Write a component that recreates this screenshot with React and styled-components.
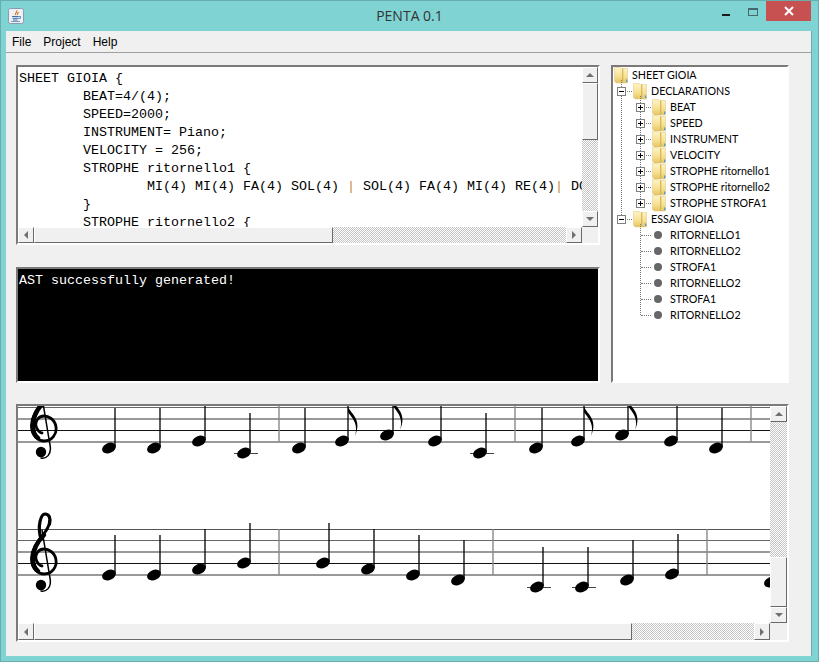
import React from 'react'
import styled, { createGlobalStyle } from 'styled-components'

const GlobalStyle = createGlobalStyle`
    html, body {
        margin: 0;
        padding: 0;
        background: #7fd3d3;
    }
`

const editorText = `SHEET GIOIA {
\tBEAT=4/(4);
\tSPEED=2000;
\tINSTRUMENT= Piano;
\tVELOCITY = 256;
\tSTROPHE ritornello1 {
\t\tMI(4) MI(4) FA(4) SOL(4) | SOL(4) FA(4) MI(4) RE(4)| DO(4)
\t}
\tSTROPHE ritornello2 {`

const declarations = ['BEAT', 'SPEED', 'INSTRUMENT', 'VELOCITY', 'STROPHE ritornello1', 'STROPHE ritornello2', 'STROPHE STROFA1']
const essay = ['RITORNELLO1', 'RITORNELLO2', 'STROFA1', 'RITORNELLO2', 'STROFA1', 'RITORNELLO2']

const staffLines = [
    { y: 0.5, color: '#555', width: 1 },
    { y: 11.5, color: '#666', width: 1 },
    { y: 23, color: '#999', width: 2 },
    { y: 34.5, color: '#111', width: 1 },
    { y: 46, color: '#999', width: 2 },
]

const notes = [
    { x: 109, y: 448 }, { x: 154, y: 448 }, { x: 199, y: 441 }, { x: 244, y: 453, ledger: true },
    { x: 299, y: 448 }, { x: 342, y: 441, flag: true }, { x: 387, y: 435, flag: true }, { x: 435, y: 441 },
    { x: 480, y: 453, ledger: true }, { x: 536, y: 448 }, { x: 578, y: 441, flag: true }, { x: 622, y: 435, flag: true },
    { x: 671, y: 441 }, { x: 716, y: 448 },
    { x: 109, y: 575 }, { x: 154, y: 575 }, { x: 199, y: 569 }, { x: 244, y: 563 },
    { x: 323, y: 563 }, { x: 368, y: 569 }, { x: 413, y: 575 }, { x: 458, y: 580 },
    { x: 537, y: 587, ledger: true }, { x: 582, y: 587, ledger: true }, { x: 627, y: 580 }, { x: 672, y: 574 },
    { x: 771, y: 582 },
]

const Clef = ({ y }) => (
    <g transform={`translate(0 ${y})`} fill="none" stroke="#000" strokeLinecap="round">
        <path strokeWidth="2.8" d="M49.5 521C50 533 32 541 31.5 558C31 570 40 574 44 574C52 574 57 567 56 560C55 552 48 549 44 549C38 549 35 555 36 559C37 563 40 566 42 566" />
        <path strokeWidth="4.5" d="M44 535C37 542 33 550 33 559C33 565 35 569 38 571" />
        <path strokeWidth="3.2" d="M41 539C37 526 41 514 45 514C49 514 51 518 49.5 524" />
        <path strokeWidth="1.5" d="M42 530L50 578C52 588 46 592 41 591" />
        <circle cx="41" cy="585" r="5.2" fill="#000" stroke="none" />
    </g>
)

const Note = ({ x, y, flag, ledger }) => {
    const top = y - 40
    const stem = x + 6
    return (
        <g>
            {ledger && <line x1={x - 10} x2={x + 14} y1={y + 0.5} y2={y + 0.5} stroke="#444" strokeWidth="1" />}
            <ellipse cx={x} cy={y} rx="7.2" ry="5" transform={`rotate(-24 ${x} ${y})`} fill="#000" />
            <line x1={stem} x2={stem} y1={y - 1} y2={top} stroke="#000" strokeWidth="1.3" />
            {flag && (
                <path
                    fill="#000"
                    d={`M${stem} ${top + 5}C${stem + 1} ${top + 12} ${stem + 15} ${top + 17} ${stem + 7} ${top + 35}C${stem + 11} ${top + 22} ${stem + 3} ${top + 16} ${stem} ${top + 11}Z`}
                />
            )}
        </g>
    )
}

const Score = () => (
    <ScoreSvg viewBox="18 406 753 218">
        {[396, 529].map(top => staffLines.map(line => (
            <line key={top + line.y} x1="18" x2="771" y1={top + line.y} y2={top + line.y} stroke={line.color} strokeWidth={line.width} />
        )))}
        {[279, 515, 751].map(x => <line key={x} x1={x} x2={x} y1="406" y2="442" stroke="#888" strokeWidth="1.4" />)}
        {[279, 493, 707].map(x => <line key={x} x1={x} x2={x} y1="529" y2="575" stroke="#888" strokeWidth="1.4" />)}
        <Clef y={-133} />
        <Clef y={0} />
        {notes.map(note => <Note key={`${note.x}-${note.y}`} {...note} />)}
    </ScoreSvg>
)

const FolderIcon = () => (
    <FolderSvg viewBox="0 0 14 17">
        <defs>
            <linearGradient id="folderFill" x1="0" x2="0" y1="0" y2="1">
                <stop offset="0" stopColor="#fdf4c8" />
                <stop offset="0.6" stopColor="#f6e08f" />
                <stop offset="1" stopColor="#e6c262" />
            </linearGradient>
        </defs>
        <path d="M0.5 0.5H6L7.5 1.5H13.5V16H2.5L0.5 14.5Z" fill="url(#folderFill)" stroke="#e2cc86" strokeWidth="0.6" />
        <rect x="8" y="1.5" width="1.3" height="14.5" fill="#d9b65a" />
        <rect x="12" y="12.5" width="1.4" height="2.5" fill="#4aa3d8" />
    </FolderSvg>
)

const JavaIcon = () => (
    <AppIconSvg viewBox="0 0 16 16">
        <rect x="0.5" y="0.5" width="15" height="15" rx="2" fill="#eef1f5" stroke="#8d9aab" />
        <path d="M8.5 2.5C10 4 6.5 5 7.5 7M10 4C10.5 5 9 5.5 9.5 7" fill="none" stroke="#e0752a" strokeWidth="1.2" />
        <path d="M4 8.5H10.5M4.5 10.3H10M5 12H9.5" stroke="#3f6ea8" strokeWidth="1" />
        <path d="M3 13.5H12" stroke="#7d97b8" strokeWidth="1" />
        <path d="M10.5 8.5H12.5V10.3H10" fill="none" stroke="#3f6ea8" strokeWidth="0.8" />
    </AppIconSvg>
)

const ScrollBar = ({ vertical, before, thumb }) => (
    <Bar $vertical={vertical}>
        <ArrowButton $dir={vertical ? 'up' : 'left'} />
        {before > 0 && <Track $vertical={vertical} $size={before} />}
        <Thumb $vertical={vertical} $size={thumb} />
        <Track $vertical={vertical} />
        <ArrowButton $dir={vertical ? 'down' : 'right'} />
    </Bar>
)

const TreeRow = ({ kind, open, label }) => (
    <Row>
        {kind !== 'root' && (
            <Slot>
                {kind === 'branch' && (
                    <Expander>
                        <svg width="7" height="7" viewBox="0 0 7 7">
                            <path d={open ? 'M1 3.5H6' : 'M1 3.5H6M3.5 1V6'} stroke="#000" strokeWidth="1" />
                        </svg>
                    </Expander>
                )}
            </Slot>
        )}
        <IconBox $root={kind === 'root'}>
            {kind === 'leaf' ? <LeafDot /> : <FolderIcon />}
        </IconBox>
        <RowLabel>{label}</RowLabel>
    </Row>
)

const App = () => {
    return (
        <Window>
            <GlobalStyle />
            <TitleBar>
                <JavaIcon />
                <Title>PENTA 0.1</Title>
                <Controls>
                    <ControlButton><MinimizeGlyph /></ControlButton>
                    <ControlButton><MaximizeGlyph /></ControlButton>
                    <CloseButton>
                        <svg width="10" height="10" viewBox="0 0 10 10">
                            <path d="M1 1L9 9M9 1L1 9" stroke="#fff" strokeWidth="2" />
                        </svg>
                    </CloseButton>
                </Controls>
            </TitleBar>
            <Frame>
                <MenuBar>
                    <MenuItem>File</MenuItem>
                    <MenuItem>Project</MenuItem>
                    <MenuItem>Help</MenuItem>
                </MenuBar>
                <Workspace>
                    <TopArea>
                        <LeftColumn>
                            <ScrollPane $height={180} $bar={16}>
                                <Code>{editorText.split('|').map((part, i) => (
                                    <React.Fragment key={i}>{i > 0 && <Pipe>|</Pipe>}{part}</React.Fragment>
                                ))}</Code>
                                <ScrollBar vertical before={0} thumb={57} />
                                <ScrollBar before={0} thumb={299} />
                                <Corner />
                            </ScrollPane>
                            <ConsolePanel>AST successfully generated!</ConsolePanel>
                        </LeftColumn>
                        <TreePanel>
                            <TreeRow kind="root" label="SHEET GIOIA" />
                            <Group $tail={104}>
                                <TreeRow kind="branch" open label="DECLARATIONS" />
                                <Group $tail={8}>
                                    {declarations.map(item => <TreeRow key={item} kind="branch" label={item} />)}
                                </Group>
                                <TreeRow kind="branch" open label="ESSAY GIOIA" />
                                <Group $tail={8}>
                                    {essay.map((item, i) => <TreeRow key={i} kind="leaf" label={item} />)}
                                </Group>
                            </Group>
                        </TreePanel>
                    </TopArea>
                    <ScrollPane $height={238} $bar={17}>
                        <ScoreView><Score /></ScoreView>
                        <ScrollBar vertical before={135} thumb={50} />
                        <ScrollBar before={0} thumb={598} />
                        <Corner />
                    </ScrollPane>
                </Workspace>
            </Frame>
        </Window>
    )
}

const Window = styled.div`
    width: 819px;
    height: 662px;
    box-sizing: border-box;
    display: flex;
    flex-direction: column;
    background: #7fd3d3;
    border: 1px solid #68aeae;
    overflow: hidden;
`
const TitleBar = styled.div`
    height: 30px;
    flex: none;
    display: grid;
    grid-template-columns: 1fr auto 1fr;
    align-items: start;
    padding: 0 7px 0 7px;
`
const AppIconSvg = styled.svg`
    width: 16px;
    height: 16px;
    margin-top: 7px;
`
const Title = styled.div`
    font: 14px "Open Sans", sans-serif;
    line-height: 29px;
    color: #333;
`
const Controls = styled.div`
    display: flex;
    justify-content: flex-end;
`
const ControlButton = styled.div`
    width: 27px;
    height: 20px;
    display: flex;
    align-items: center;
    justify-content: center;
`
const MinimizeGlyph = styled.div`
    width: 8px;
    height: 2px;
    margin-top: 8px;
    background: #1c1c1c;
`
const MaximizeGlyph = styled.div`
    width: 10px;
    height: 8px;
    margin-top: 2px;
    border: 1px solid #45696d;
    border-top-width: 2px;
    box-sizing: border-box;
`
const CloseButton = styled.div`
    width: 45px;
    height: 20px;
    background: #c75050;
    display: flex;
    align-items: center;
    justify-content: center;
`
const Frame = styled.div`
    flex: 1;
    display: flex;
    flex-direction: column;
    margin: 0 6px 5px 5px;
    background: #f0f0f0;
    border-right: 1px solid #68aeae;
`
const MenuBar = styled.div`
    height: 21px;
    flex: none;
    box-sizing: content-box;
    display: flex;
    align-items: center;
    gap: 12px;
    padding-left: 6px;
    border-bottom: 1px solid #a0a0a0;
`
const MenuItem = styled.span`
    font: 12px "Liberation Sans", sans-serif;
    margin-top: 1px;
    color: #000;
`
const Workspace = styled.div`
    flex: 1;
    display: flex;
    flex-direction: column;
    gap: 21px;
    padding: 12px 0 0 10px;
`
const TopArea = styled.div`
    display: grid;
    grid-template-columns: 584px 178px;
    gap: 11px;
`
const LeftColumn = styled.div`
    display: flex;
    flex-direction: column;
    gap: 22px;
`
const ScrollPane = styled.div`
    height: ${p => p.$height}px;
    width: 773px;
    box-sizing: border-box;
    display: grid;
    grid-template-columns: 1fr ${p => p.$bar}px;
    grid-template-rows: 1fr ${p => p.$bar}px;
    background: #fff;
    border: 2px solid;
    border-color: #7a7a7a #fff #fff #7a7a7a;
    ${LeftColumn} & {
        width: 584px;
    }
`
const Code = styled.pre`
    margin: 0;
    padding: 3px 0 0 1px;
    overflow: hidden;
    font: 13.33px/18px "Liberation Mono", monospace;
    tab-size: 8;
    color: #000;
`
const Pipe = styled.span`
    color: #c9873a;
`
const ConsolePanel = styled.div`
    height: 116px;
    box-sizing: border-box;
    padding: 3px 0 0 1px;
    background: #000;
    color: #fff;
    font: 13.33px/18px "Liberation Mono", monospace;
    border: 2px solid;
    border-color: #7a7a7a #fff #fff #7a7a7a;
`
const TreePanel = styled.div`
    box-sizing: border-box;
    height: 318px;
    background: #fff;
    border: 2px solid;
    border-color: #7a7a7a #fff #fff #7a7a7a;
`
const Group = styled.div`
    position: relative;
    margin-left: ${p => (p.$tail > 8 ? 0 : 19)}px;
    &::before {
        content: '';
        position: absolute;
        left: 8px;
        top: -3px;
        bottom: ${p => p.$tail}px;
        border-left: 1px dotted #777;
    }
`
const Row = styled.div`
    position: relative;
    height: 16px;
    display: flex;
    align-items: center;
`
const Slot = styled.div`
    position: relative;
    width: 20px;
    height: 16px;
    flex: none;
    &::before {
        content: '';
        position: absolute;
        left: 9px;
        right: 1px;
        top: 8px;
        border-top: 1px dotted #777;
    }
`
const Expander = styled.div`
    position: absolute;
    left: 4px;
    top: 4px;
    width: 9px;
    height: 9px;
    box-sizing: border-box;
    border: 1px solid #808080;
    background: #fff;
    display: flex;
    & > svg {
        display: block;
    }
`
const IconBox = styled.div`
    width: 14px;
    height: 16px;
    flex: none;
    margin-left: ${p => (p.$root ? 1 : 0)}px;
    display: flex;
    align-items: center;
    justify-content: center;
`
const FolderSvg = styled.svg`
    width: 14px;
    height: 17px;
    flex: none;
`
const LeafDot = styled.div`
    width: 8px;
    height: 8px;
    margin-left: -2px;
    border-radius: 50%;
    background: #666;
`
const RowLabel = styled.span`
    margin: 0 0 1px 4px;
    font: 10.7px "Lato", sans-serif;
    color: #000;
    white-space: nowrap;
`
const Bar = styled.div`
    display: flex;
    flex-direction: ${p => (p.$vertical ? 'column' : 'row')};
    min-width: 0;
    min-height: 0;
`
const raised = `
    background: #f0f0f0;
    box-sizing: border-box;
    border: 1px solid;
    border-color: #fff #696969 #696969 #fff;
`
const ArrowButton = styled.div`
    ${raised}
    flex: none;
    width: ${p => (p.$dir === 'up' || p.$dir === 'down' ? 'auto' : '16px')};
    height: ${p => (p.$dir === 'up' || p.$dir === 'down' ? '16px' : 'auto')};
    display: flex;
    align-items: center;
    justify-content: center;
    &::after {
        content: '';
        width: 0;
        height: 0;
        border-style: solid;
        border-color: transparent;
        border-width: 4px;
        ${p => p.$dir === 'up' && 'border-bottom-color: #707070; border-top-width: 0;'}
        ${p => p.$dir === 'down' && 'border-top-color: #707070; border-bottom-width: 0;'}
        ${p => p.$dir === 'left' && 'border-right-color: #707070; border-left-width: 0;'}
        ${p => p.$dir === 'right' && 'border-left-color: #707070; border-right-width: 0;'}
    }
`
const Thumb = styled.div`
    ${raised}
    flex: none;
    ${p => (p.$vertical ? `height: ${p.$size}px;` : `width: ${p.$size}px;`)}
`
const Track = styled.div`
    flex: ${p => (p.$size ? 'none' : 1)};
    ${p => p.$size && (p.$vertical ? `height: ${p.$size}px;` : `width: ${p.$size}px;`)}
    background: repeating-conic-gradient(#c4c4c4 0 25%, #fff 0 50%) 0 0 / 2px 2px;
`
const Corner = styled.div`
    background: #f0f0f0;
`
const ScoreView = styled.div`
    overflow: hidden;
    min-height: 0;
`
const ScoreSvg = styled.svg`
    display: block;
    width: 753px;
    height: 218px;
`

export default App
